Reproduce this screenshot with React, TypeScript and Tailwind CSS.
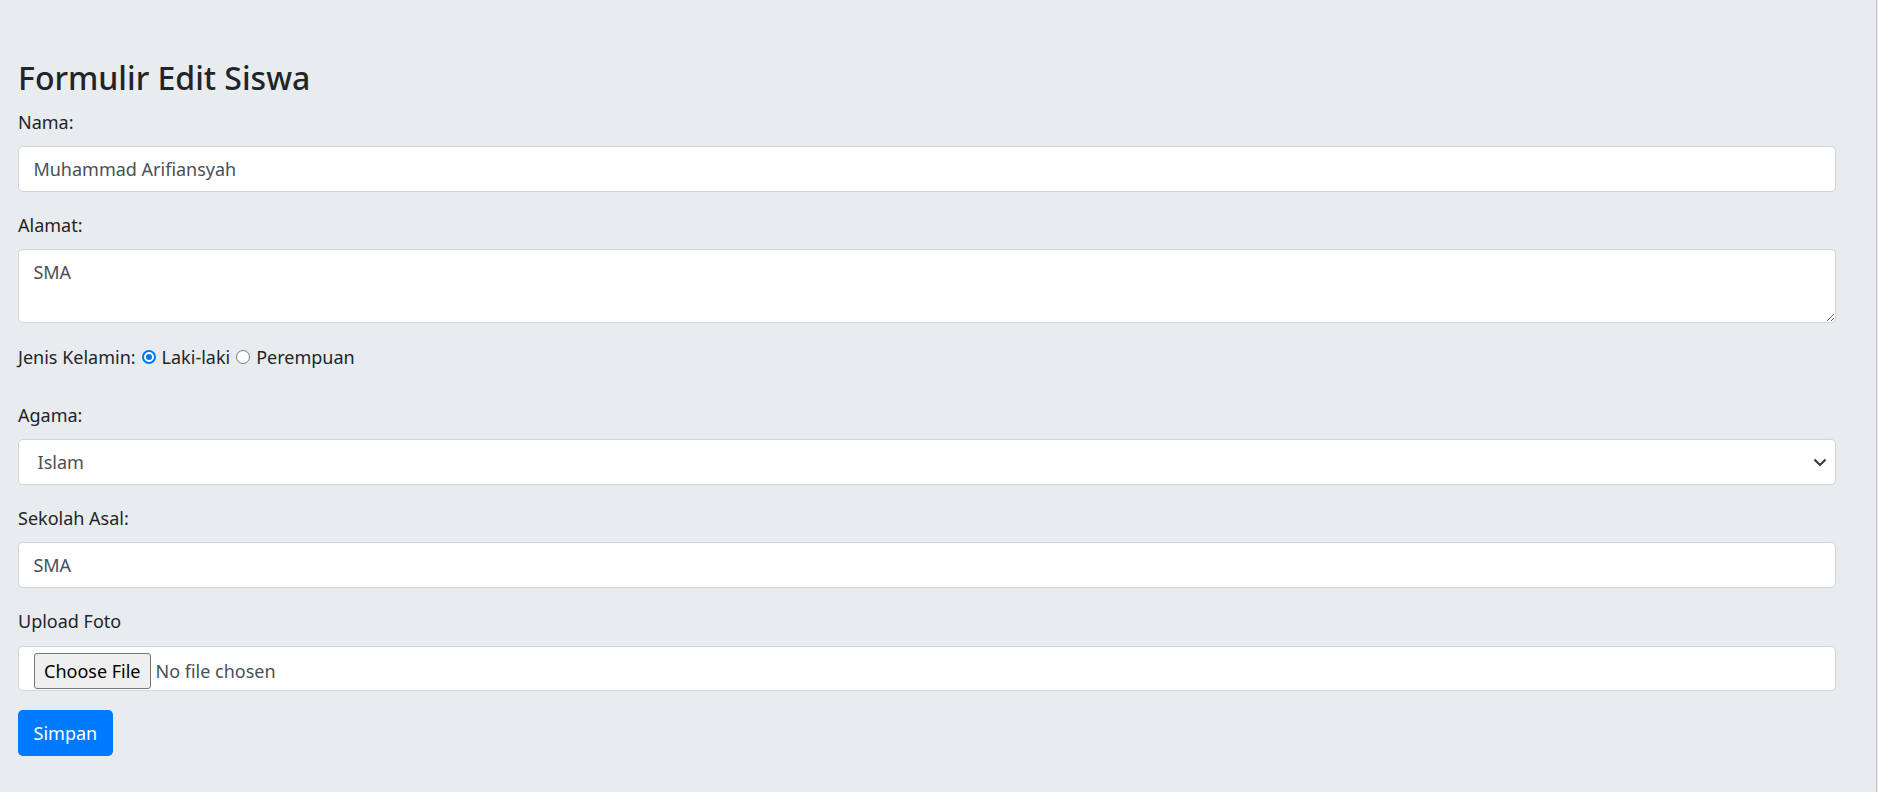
import * as React from "react";

const font = { fontFamily: '"Segoe UI", "Noto Sans", "Open Sans", sans-serif' };

function Label({ children }: { children: React.ReactNode }) {
  return <label className="mb-[9.6px] block text-[18px] leading-[28.8px] text-[#212529]">{children}</label>;
}

function Radio({ checked }: { checked?: boolean }) {
  return checked ? (
    <span className="mx-[6px] flex h-[14px] w-[14px] items-center justify-center rounded-full border-[2px] border-[#0075ff] bg-white">
      <span className="h-[6px] w-[6px] rounded-full bg-[#0075ff]" />
    </span>
  ) : (
    <span className="mx-[6px] block h-[14px] w-[14px] rounded-full border border-[#767676] bg-white" />
  );
}

export default function App() {
  return (
    <div className="flex h-[792px] w-full bg-[#e9ecef]" style={font}>
      <div className="w-[1877px] border-r border-[#c4c7ca] pl-[18px] pr-[40px] pt-[58px]">
        <h3 className="mb-[9.6px] text-[32px] font-medium leading-[40.3px] text-[#212529]">Formulir Edit Siswa</h3>

        <form className="text-[18px] leading-[28.8px]" onSubmit={(e) => e.preventDefault()}>
          <div className="mb-[19.2px]">
            <Label>Nama:</Label>
            <input
              defaultValue="Muhammad Arifiansyah"
              className="block h-[45.6px] w-full rounded-[4.8px] border border-[#ced4da] bg-white px-[14.4px] py-[7.2px] text-[#495057] outline-none"
            />
          </div>

          <div className="mb-[19.2px]">
            <Label>Alamat:</Label>
            <textarea
              rows={2}
              defaultValue="SMA"
              className="block h-[74px] w-full rounded-[4.8px] border border-[#ced4da] bg-white px-[14.4px] py-[7.2px] text-[#495057] outline-none"
            />
          </div>

          <div className="mb-[29.4px] flex h-[28.8px] items-center text-[#212529]">
            <span>Jenis Kelamin:</span>
            <Radio checked />
            <span>Laki-laki</span>
            <Radio />
            <span>Perempuan</span>
          </div>

          <div className="mb-[19.2px]">
            <Label>Agama:</Label>
            <div className="flex h-[45.6px] w-full items-center justify-between rounded-[4.8px] border border-[#ced4da] bg-white pl-[18.6px] pr-[8px] text-[#495057]">
              <span>Islam</span>
              <svg width="14" height="9" viewBox="0 0 14 9" fill="none">
                <path d="M1.5 1.5l5.5 5.5 5.5-5.5" stroke="#3b3b3b" strokeWidth="2.2" />
              </svg>
            </div>
          </div>

          <div className="mb-[19.2px]">
            <Label>Sekolah Asal:</Label>
            <input
              defaultValue="SMA"
              className="block h-[45.6px] w-full rounded-[4.8px] border border-[#ced4da] bg-white px-[14.4px] py-[7.2px] text-[#495057] outline-none"
            />
          </div>

          <div className="mb-[19.2px]">
            <Label>Upload Foto</Label>
            <div className="flex h-[45.6px] w-full items-start rounded-[4.8px] border border-[#ced4da] bg-white px-[15px] pt-[6px]">
              <button
                type="button"
                className="h-[36px] rounded-[3px] border border-[#767676] bg-[#efefef] px-[9px] text-[18px] leading-[34px] text-black"
              >
                Choose File
              </button>
              <span className="ml-[5px] leading-[36px] text-[#495057]">No file chosen</span>
            </div>
          </div>

          <button
            type="submit"
            className="h-[45.6px] rounded-[4.8px] bg-[#007bff] px-[15.6px] text-[18px] text-white"
          >
            Simpan
          </button>
        </form>
      </div>
    </div>
  );
}
